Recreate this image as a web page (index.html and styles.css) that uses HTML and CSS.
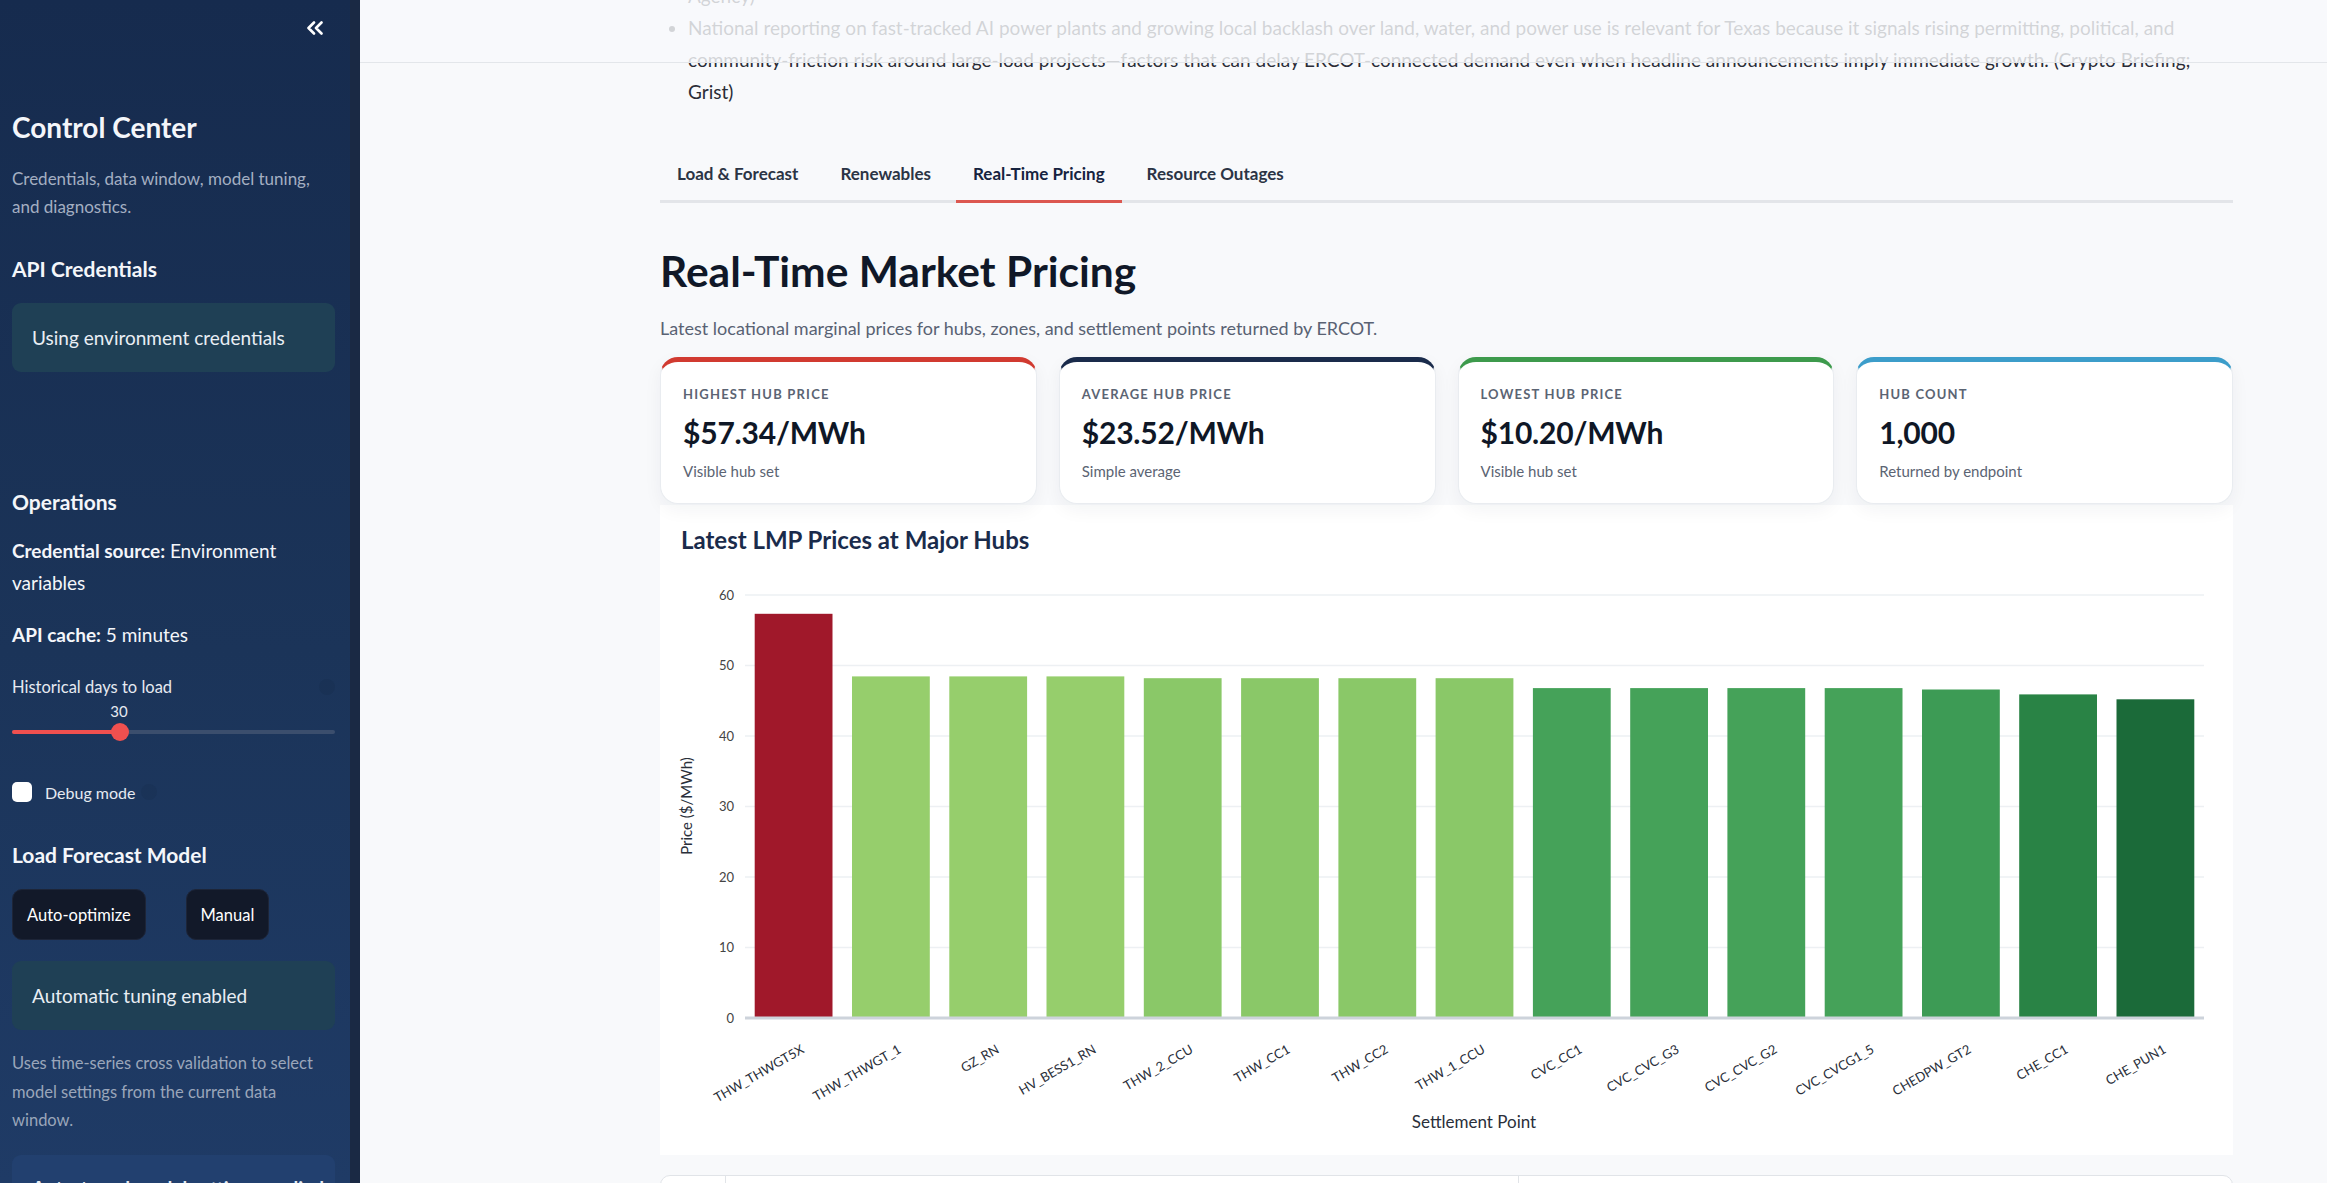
FILE: index.html
```html
<!DOCTYPE html>
<html>
    <head>
        <meta charset="utf-8">
        <title>ERCOT Grid Monitor</title>
        <link rel="stylesheet" href="styles.css">
    </head>
    <body>
        <div class="app">
            <aside class="sidebar">
                <div class="sb-top">
                    <svg class="collapse" width="18" height="14" viewBox="0 0 18 14">
                        <path d="M8 1.5 L2.5 7 L8 12.5 M15.5 1.5 L10 7 L15.5 12.5" fill="none" stroke="#ffffff" stroke-width="2.6" stroke-linecap="round" stroke-linejoin="round"/>
                    </svg>
                </div>

                <h2 class="sb-title">Control Center</h2>
                <p class="sb-sub">Credentials, data window, model tuning, and diagnostics.</p>

                <h3 class="sb-head first">API Credentials</h3>
                <div class="sb-note teal">Using environment credentials</div>

                <h3 class="sb-head ops">Operations</h3>
                <p class="sb-line"><b>Credential source:</b> Environment variables</p>
                <p class="sb-line cache"><b>API cache:</b> 5 minutes</p>

                <div class="sb-label">Historical days to load <span class="help"></span></div>
                <div class="slider">
                    <span class="slider-value">30</span>
                    <div class="track"><div class="track-fill"></div></div>
                    <span class="thumb"></span>
                </div>

                <label class="check">
                    <span class="box"></span>
                    Debug mode
                    <span class="help small"></span>
                </label>

                <h3 class="sb-head model">Load Forecast Model</h3>
                <div class="sb-buttons">
                    <div><button class="sb-btn">Auto-optimize</button></div>
                    <div><button class="sb-btn">Manual</button></div>
                </div>
                <div class="sb-note teal tuning">Automatic tuning enabled</div>
                <p class="sb-caption">Uses time-series cross validation to select model settings from the current data window.</p>
                <div class="sb-note blue">Auto-tuned model settings applied</div>
            </aside>

            <main class="main">
                <header class="topbar"></header>

                <div class="block">
                    <ul class="news">
                        <li class="tail">Agency)</li>
                        <li>National reporting on fast-tracked AI power plants and growing local backlash over land, water, and power use is relevant for Texas because it signals rising permitting, political, and community-friction risk around large-load projects—factors that can delay ERCOT-connected demand even when headline announcements imply immediate growth. (Crypto Briefing; Grist)</li>
                    </ul>

                    <nav class="tabs">
                        <span class="tab">Load &amp; Forecast</span>
                        <span class="tab">Renewables</span>
                        <span class="tab active">Real-Time Pricing</span>
                        <span class="tab">Resource Outages</span>
                    </nav>

                    <h1 class="page-title">Real-Time Market Pricing</h1>
                    <p class="lead">Latest locational marginal prices for hubs, zones, and settlement points returned by ERCOT.</p>

                    <div class="metrics">
                        <div class="metric red">
                            <div class="metric-label">Highest Hub Price</div>
                            <div class="metric-value">$57.34/MWh</div>
                            <div class="metric-sub">Visible hub set</div>
                        </div>
                        <div class="metric navy">
                            <div class="metric-label">Average Hub Price</div>
                            <div class="metric-value">$23.52/MWh</div>
                            <div class="metric-sub">Simple average</div>
                        </div>
                        <div class="metric green">
                            <div class="metric-label">Lowest Hub Price</div>
                            <div class="metric-value">$10.20/MWh</div>
                            <div class="metric-sub">Visible hub set</div>
                        </div>
                        <div class="metric blue">
                            <div class="metric-label">Hub Count</div>
                            <div class="metric-value">1,000</div>
                            <div class="metric-sub">Returned by endpoint</div>
                        </div>
                    </div>

                    <section class="chart-card">
                        <h3 class="chart-title">Latest LMP Prices at Major Hubs</h3>
                        <svg class="chart" width="1573" height="585" viewBox="0 0 1573 585">
                            <!-- grid -->
                            <g stroke="#edf0f3" stroke-width="1.5">
                                <line x1="85" x2="1544" y1="25" y2="25"/>
                                <line x1="85" x2="1544" y1="95.5" y2="95.5"/>
                                <line x1="85" x2="1544" y1="166" y2="166"/>
                                <line x1="85" x2="1544" y1="236.5" y2="236.5"/>
                                <line x1="85" x2="1544" y1="307" y2="307"/>
                                <line x1="85" x2="1544" y1="377.5" y2="377.5"/>
                            </g>
                            <g class="tick" text-anchor="end">
                                <text x="74" y="29.5">60</text>
                                <text x="74" y="100">50</text>
                                <text x="74" y="170.5">40</text>
                                <text x="74" y="241">30</text>
                                <text x="74" y="311.5">20</text>
                                <text x="74" y="382">10</text>
                                <text x="74" y="452.5">0</text>
                            </g>
                            <text class="axis-title" transform="translate(32,236) rotate(-90)" text-anchor="middle">Price ($/MWh)</text>

                            <!-- bars: 15 settlement points, 7.05px per $ -->
                            <rect x="94.7" y="43.8" width="77.8" height="404.2" fill="#a0182a"/>
                            <rect x="192.0" y="106.4" width="77.8" height="341.6" fill="#96ce6c"/>
                            <rect x="289.3" y="106.4" width="77.8" height="341.6" fill="#96ce6c"/>
                            <rect x="386.5" y="106.4" width="77.8" height="341.6" fill="#96ce6c"/>
                            <rect x="483.8" y="108.2" width="77.8" height="339.8" fill="#8ac868"/>
                            <rect x="581.1" y="108.2" width="77.8" height="339.8" fill="#8ac868"/>
                            <rect x="678.4" y="108.2" width="77.8" height="339.8" fill="#8ac868"/>
                            <rect x="775.6" y="108.2" width="77.8" height="339.8" fill="#8ac868"/>
                            <rect x="872.9" y="118.1" width="77.8" height="329.9" fill="#45a259"/>
                            <rect x="970.2" y="118.1" width="77.8" height="329.9" fill="#45a259"/>
                            <rect x="1067.4" y="118.1" width="77.8" height="329.9" fill="#45a259"/>
                            <rect x="1164.7" y="118.1" width="77.8" height="329.9" fill="#45a259"/>
                            <rect x="1262.0" y="119.5" width="77.8" height="328.5" fill="#3d9b55"/>
                            <rect x="1359.2" y="124.4" width="77.8" height="323.6" fill="#298345"/>
                            <rect x="1456.5" y="129.3" width="77.8" height="318.7" fill="#1b6a39"/>

                            <line x1="85" x2="1544" y1="448" y2="448" stroke="#cdd3db" stroke-width="3"/>

                            <g class="xlabel" text-anchor="end">
                                <text transform="translate(145,482) rotate(-30)">THW_THWGT5X</text>
                                <text transform="translate(242,482) rotate(-30)">THW_THWGT_1</text>
                                <text transform="translate(340,482) rotate(-30)">GZ_RN</text>
                                <text transform="translate(437,482) rotate(-30)">HV_BESS1_RN</text>
                                <text transform="translate(534,482) rotate(-30)">THW_2_CCU</text>
                                <text transform="translate(631,482) rotate(-30)">THW_CC1</text>
                                <text transform="translate(729,482) rotate(-30)">THW_CC2</text>
                                <text transform="translate(826,482) rotate(-30)">THW_1_CCU</text>
                                <text transform="translate(923,482) rotate(-30)">CVC_CC1</text>
                                <text transform="translate(1020,482) rotate(-30)">CVC_CVC_G3</text>
                                <text transform="translate(1118,482) rotate(-30)">CVC_CVC_G2</text>
                                <text transform="translate(1215,482) rotate(-30)">CVC_CVCG1_5</text>
                                <text transform="translate(1312,482) rotate(-30)">CHEDPW_GT2</text>
                                <text transform="translate(1409,482) rotate(-30)">CHE_CC1</text>
                                <text transform="translate(1507,482) rotate(-30)">CHE_PUN1</text>
                            </g>
                            <text class="axis-title x" x="814" y="558" text-anchor="middle">Settlement Point</text>
                        </svg>
                    </section>

                    <div class="table-top">
                        <div class="cell"></div>
                        <div class="cell"></div>
                        <div class="cell"></div>
                    </div>
                </div>
            </main>
        </div>
    </body>
</html>
```

FILE: styles.css
```css
body {
    margin: 0;
    height: 1183px;
    overflow: hidden;
    font-family: Lato, "Liberation Sans", sans-serif;
    color: #31333f;
    background: #f8f9fb;
}

.app {
    display: flex;
    height: 100vh;
}

/* ---------- sidebar ---------- */

.sidebar {
    flex: none;
    width: 360px;
    box-sizing: border-box;
    padding: 0 15px 0 12px;
    background: linear-gradient(180deg, #162b4e 0%, #1b3459 55%, #1f3b66 100%);
    border-right: 10px solid #1a2944;
    color: #f4f6fa;
    overflow: hidden;
}

.sb-top {
    display: flex;
    justify-content: flex-end;
    height: 55px;
    padding: 21px 11px 0 0;
    box-sizing: border-box;
}

.sb-title {
    margin: 54px 0 0;
    font-size: 28px;
    line-height: 36px;
    font-weight: 700;
}

.sb-sub {
    margin: 20px 0 0;
    font-size: 17px;
    line-height: 28px;
    color: #a4afc2;
}

.sb-head {
    margin: 0;
    font-size: 21px;
    line-height: 30px;
    font-weight: 700;
}
.sb-head.first { margin-top: 33px; }
.sb-head.ops { margin-top: 115px; }
.sb-head.model { margin-top: 36px; }

.sb-note {
    margin-top: 19px;
    height: 69px;
    display: flex;
    align-items: center;
    padding-left: 20px;
    border-radius: 9px;
    font-size: 19px;
    color: #e9eef4;
}
.sb-note.teal { background: #1f4055; }
.sb-note.tuning { margin-top: 21px; }
.sb-note.blue {
    margin-top: 20px;
    background: #22406f;
    align-items: flex-start;
    padding-top: 21px;
    box-sizing: border-box;
    font-weight: 700;
}

.sb-line {
    margin: 18px 0 0;
    font-size: 19px;
    line-height: 32px;
}
.sb-line.cache { margin-top: 20px; }

.sb-label {
    margin-top: 24px;
    display: flex;
    justify-content: space-between;
    align-items: center;
    font-size: 16.5px;
    line-height: 24px;
    color: #e6eaf1;
}

.help {
    width: 16px;
    height: 16px;
    border-radius: 50%;
    background: rgba(10, 20, 40, 0.08);
}
.help.small { margin-left: 6px; }

.slider {
    position: relative;
    height: 46px;
}
.slider-value {
    position: absolute;
    left: 95px;
    top: 2px;
    width: 24px;
    text-align: center;
    font-size: 15px;
    line-height: 20px;
    color: #e6eaf1;
}
.track {
    position: absolute;
    left: 0;
    right: 0;
    top: 31px;
    height: 4px;
    border-radius: 2px;
    background: #3b4e6d;
}
.track-fill {
    width: 108px;
    height: 100%;
    border-radius: 2px;
    background: #f0504f;
}
.thumb {
    position: absolute;
    left: 99px;
    top: 24px;
    width: 18px;
    height: 18px;
    border-radius: 50%;
    background: #f0504f;
}

.check {
    margin-top: 35px;
    display: flex;
    align-items: center;
    height: 24px;
    font-size: 16px;
    color: #e6eaf1;
}
.check .box {
    width: 20px;
    height: 20px;
    margin-right: 13px;
    border-radius: 5px;
    background: #ffffff;
}

.sb-buttons {
    margin-top: 19px;
    display: grid;
    grid-template-columns: 1fr 1fr;
    gap: 24px;
}
.sb-btn {
    height: 51px;
    padding: 0 14px;
    border: 1px solid #1d2538;
    border-radius: 10px;
    background: #121929;
    color: #ffffff;
    font-family: inherit;
    font-size: 16.5px;
}

.sb-caption {
    margin: 19px 0 0;
    font-size: 16.5px;
    line-height: 28.5px;
    color: #9aa6ba;
}

/* ---------- main ---------- */

.main {
    flex: 1;
    position: relative;
    overflow: hidden;
    background: #f8f9fb;
}

.topbar {
    position: absolute;
    top: 0;
    left: 0;
    right: 0;
    height: 62px;
    background: rgba(248, 249, 251, 0.82);
    border-bottom: 1px solid #e3e6ea;
    z-index: 2;
}

.block {
    margin-top: -20px;
    padding: 0 94px 0 300px;
}

.news {
    margin: 0;
    padding: 0 6px 0 28px;
    font-size: 19px;
    line-height: 32px;
    color: #2a2c36;
}
.news .tail { list-style: none; }

.tabs {
    margin-top: 54px;
    display: flex;
    gap: 8px;
    border-bottom: 3px solid #e3e5e9;
}
.tab {
    padding: 0 17px 14px;
    margin-bottom: -3px;
    border-bottom: 3px solid transparent;
    font-size: 17px;
    line-height: 24px;
    font-weight: 700;
    color: #2b3445;
}
.tab.active {
    color: #16233f;
    border-bottom-color: #dc5750;
}

.page-title {
    margin: 42px 0 0;
    font-size: 42.5px;
    line-height: 52px;
    font-weight: 700;
    color: #101828;
}

.lead {
    margin: 18px 0 0;
    font-size: 18px;
    line-height: 26px;
    color: #596273;
}

.metrics {
    margin-top: 16px;
    display: grid;
    grid-template-columns: repeat(4, 1fr);
    gap: 22px;
}
.metric {
    height: 147px;
    box-sizing: border-box;
    padding: 23px 22px 0;
    background: #ffffff;
    border: 1px solid #e9ecf0;
    border-top: 5px solid;
    border-radius: 18px;
    box-shadow: 0 6px 18px rgba(20, 30, 50, 0.05);
}
.metric.red { border-top-color: #d13a30; }
.metric.navy { border-top-color: #1a2b4b; }
.metric.green { border-top-color: #3d9a4c; }
.metric.blue { border-top-color: #3c9dca; }

.metric-label {
    font-size: 13px;
    line-height: 18px;
    font-weight: 700;
    letter-spacing: 1.2px;
    text-transform: uppercase;
    color: #5b6473;
}
.metric-value {
    margin-top: 9px;
    font-size: 30px;
    line-height: 40px;
    font-weight: 700;
    letter-spacing: -0.2px;
    color: #0f1726;
}
.metric-sub {
    margin-top: 8px;
    font-size: 15px;
    line-height: 22px;
    color: #5b6473;
}

.chart-card {
    margin-top: 1px;
    height: 650px;
    background: #ffffff;
}
.chart-title {
    margin: 0;
    padding: 20px 0 0 21px;
    font-size: 24px;
    line-height: 30px;
    font-weight: 700;
    color: #1a2b4b;
}
.chart {
    display: block;
    margin-top: 15px;
}
.chart text {
    font-family: Lato, "Liberation Sans", sans-serif;
}
.tick text {
    font-size: 13px;
    fill: #444444;
}
.xlabel text {
    font-size: 13px;
    fill: #2a2f3a;
}
.axis-title {
    font-size: 15px;
    fill: #2a2f3a;
}
.axis-title.x { font-size: 17px; }

.table-top {
    margin-top: 20px;
    height: 60px;
    display: grid;
    grid-template-columns: 64px 793px 1fr;
    background: #ffffff;
    border: 1px solid #e1e4e8;
    border-radius: 10px 10px 0 0;
}
.table-top .cell + .cell {
    border-left: 1px solid #e1e4e8;
}
```
